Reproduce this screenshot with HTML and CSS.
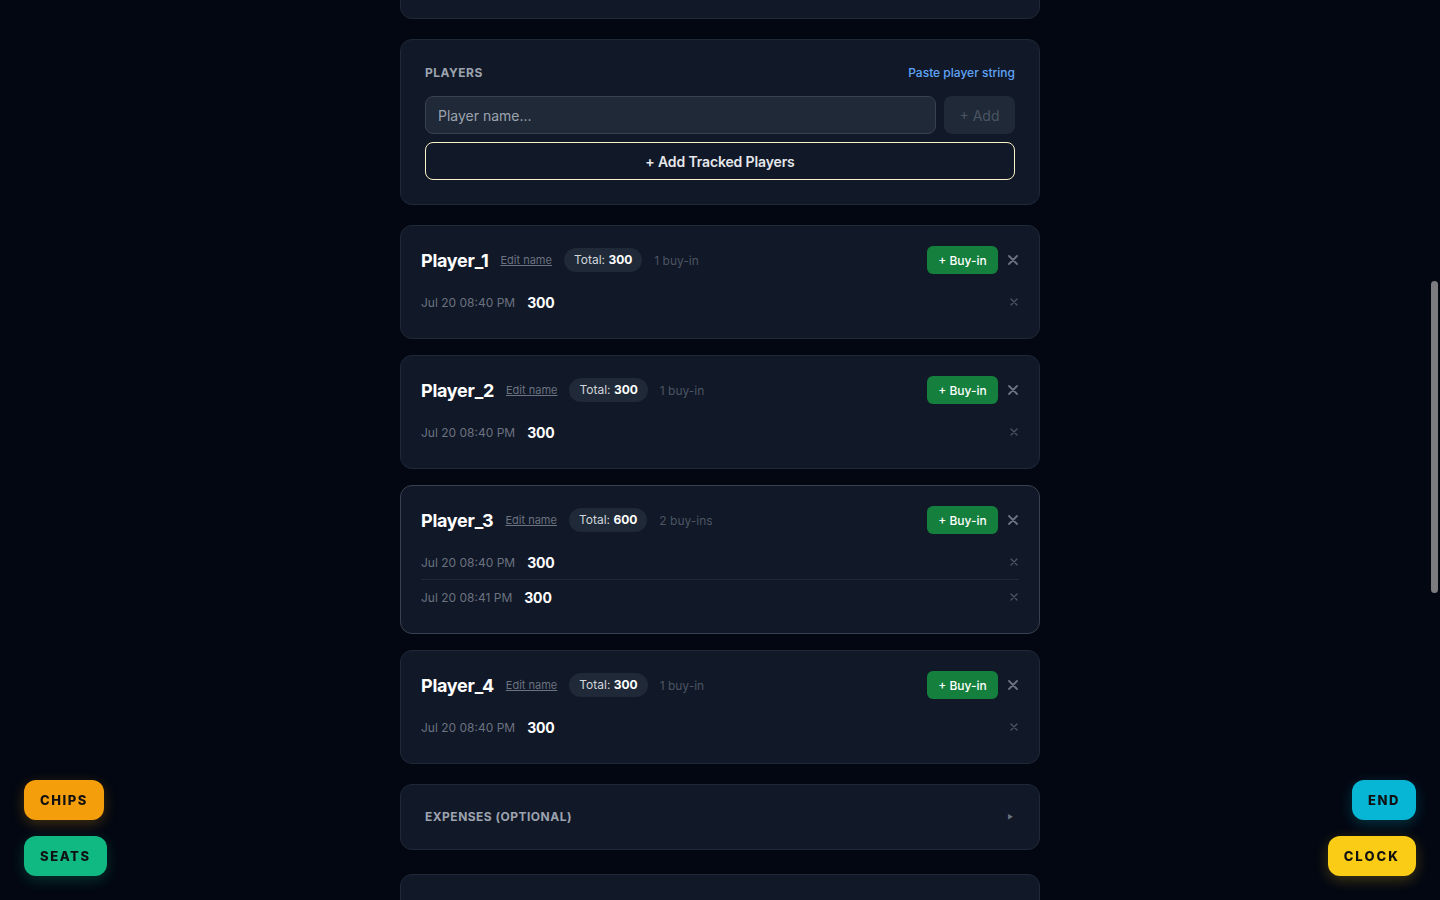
FILE: index.html
```html
<!DOCTYPE html>
<html lang="en">
<head>
    <meta charset="UTF-8">
    <meta name="viewport" content="width=device-width, initial-scale=1.0">
    <title>Game Tracker</title>
    <link rel="stylesheet" href="styles.css">
</head>
<body>
    <main class="page">
        <section class="card card-stub"></section>

        <section class="card section players">
            <div class="section-head">
                <span class="label">Players</span>
                <a class="link" href="#">Paste player string</a>
            </div>
            <div class="add-row">
                <input class="name-input" type="text" placeholder="Player name...">
                <button class="add-btn">+ Add</button>
            </div>
            <button class="tracked-btn">+ Add Tracked Players</button>
        </section>

        <div class="player-list">
            <div class="card player">
                <div class="player-head">
                    <span class="player-name">Player_1</span>
                    <a class="edit" href="#">Edit name</a>
                    <span class="pill">Total: <b>300</b></span>
                    <span class="count">1 buy-in</span>
                    <button class="buyin-btn">+ Buy-in</button>
                    <button class="remove"><svg width="10" height="10" viewBox="0 0 10 10"><path d="M1 1L9 9M9 1L1 9"/></svg></button>
                </div>
                <div class="entry">
                    <span class="time">Jul 20 08:40 PM</span><span class="amount">300</span>
                    <button class="remove small"><svg width="8" height="8" viewBox="0 0 8 8"><path d="M1 1L7 7M7 1L1 7"/></svg></button>
                </div>
            </div>

            <div class="card player">
                <div class="player-head">
                    <span class="player-name">Player_2</span>
                    <a class="edit" href="#">Edit name</a>
                    <span class="pill">Total: <b>300</b></span>
                    <span class="count">1 buy-in</span>
                    <button class="buyin-btn">+ Buy-in</button>
                    <button class="remove"><svg width="10" height="10" viewBox="0 0 10 10"><path d="M1 1L9 9M9 1L1 9"/></svg></button>
                </div>
                <div class="entry">
                    <span class="time">Jul 20 08:40 PM</span><span class="amount">300</span>
                    <button class="remove small"><svg width="8" height="8" viewBox="0 0 8 8"><path d="M1 1L7 7M7 1L1 7"/></svg></button>
                </div>
            </div>

            <div class="card player active">
                <div class="player-head">
                    <span class="player-name">Player_3</span>
                    <a class="edit" href="#">Edit name</a>
                    <span class="pill">Total: <b>600</b></span>
                    <span class="count">2 buy-ins</span>
                    <button class="buyin-btn">+ Buy-in</button>
                    <button class="remove"><svg width="10" height="10" viewBox="0 0 10 10"><path d="M1 1L9 9M9 1L1 9"/></svg></button>
                </div>
                <div class="entry">
                    <span class="time">Jul 20 08:40 PM</span><span class="amount">300</span>
                    <button class="remove small"><svg width="8" height="8" viewBox="0 0 8 8"><path d="M1 1L7 7M7 1L1 7"/></svg></button>
                </div>
                <div class="entry">
                    <span class="time">Jul 20 08:41 PM</span><span class="amount">300</span>
                    <button class="remove small"><svg width="8" height="8" viewBox="0 0 8 8"><path d="M1 1L7 7M7 1L1 7"/></svg></button>
                </div>
            </div>

            <div class="card player">
                <div class="player-head">
                    <span class="player-name">Player_4</span>
                    <a class="edit" href="#">Edit name</a>
                    <span class="pill">Total: <b>300</b></span>
                    <span class="count">1 buy-in</span>
                    <button class="buyin-btn">+ Buy-in</button>
                    <button class="remove"><svg width="10" height="10" viewBox="0 0 10 10"><path d="M1 1L9 9M9 1L1 9"/></svg></button>
                </div>
                <div class="entry">
                    <span class="time">Jul 20 08:40 PM</span><span class="amount">300</span>
                    <button class="remove small"><svg width="8" height="8" viewBox="0 0 8 8"><path d="M1 1L7 7M7 1L1 7"/></svg></button>
                </div>
            </div>
        </div>

        <section class="card section expenses">
            <span class="label">Expenses (optional)</span>
            <span class="caret">&#9654;</span>
        </section>

        <section class="card card-next"></section>
    </main>

    <div class="fab-col left">
        <button class="fab chips">CHIPS</button>
        <button class="fab seats">SEATS</button>
    </div>
    <div class="fab-col right">
        <button class="fab end">END</button>
        <button class="fab clock">CLOCK</button>
    </div>

    <div class="scroll-thumb"></div>
</body>
</html>
```

FILE: styles.css
```css
body {
    margin: 0;
    height: 900px;
    overflow: hidden;
    background: #030712;
    color: #f9fafb;
    font-family: Inter, "Noto Sans", sans-serif;
}
button {
    font-family: inherit;
    cursor: pointer;
}
.page {
    width: 640px;
    margin: 0 auto;
}
.card {
    background: #111827;
    border: 1px solid #1f2937;
    border-radius: 12px;
    box-sizing: border-box;
}
.card-stub {
    height: 60px;
    margin-top: -41px;
}
.section {
    padding: 24px;
}
.players {
    margin-top: 20px;
}
.section-head {
    display: flex;
    justify-content: space-between;
    align-items: center;
    height: 16px;
    margin-bottom: 16px;
}
.label {
    font-size: 12px;
    font-weight: 700;
    letter-spacing: 0.04em;
    text-transform: uppercase;
    color: #9ca3af;
}
.link {
    font-size: 12px;
    font-weight: 500;
    color: #60a5fa;
    text-decoration: none;
}
.add-row {
    display: flex;
    gap: 8px;
    margin-bottom: 8px;
}
.name-input {
    flex: 1;
    height: 38px;
    box-sizing: border-box;
    padding: 0 12px;
    background: #1f2937;
    border: 1px solid #374151;
    border-radius: 8px;
    color: #f9fafb;
    font-family: inherit;
    font-size: 14px;
    outline: none;
}
.name-input::placeholder {
    color: #9ca3af;
}
.add-btn {
    width: 71px;
    height: 38px;
    background: #1f2937;
    border: none;
    border-radius: 8px;
    color: #4b5563;
    font-size: 14px;
}
.tracked-btn {
    width: 100%;
    height: 38px;
    background: transparent;
    border: 1px solid #fef3c7;
    border-radius: 8px;
    color: #e5e7eb;
    font-size: 14px;
    font-weight: 600;
    letter-spacing: -0.01em;
}
.player-list {
    margin-top: 20px;
    display: flex;
    flex-direction: column;
    gap: 16px;
}
.player {
    padding: 20px 20px 19px;
}
.player.active {
    border-color: #374151;
}
.player-head {
    display: flex;
    align-items: center;
    height: 28px;
    margin-bottom: 11px;
}
.player-name {
    font-size: 18px;
    font-weight: 700;
    color: #fff;
    letter-spacing: -0.015em;
    margin-right: 12px;
}
.edit {
    font-size: 11px;
    color: #6b7280;
    text-decoration: underline;
    margin-right: 12px;
}
.pill {
    height: 24px;
    line-height: 24px;
    padding: 0 10px;
    background: #1f2937;
    border-radius: 12px;
    font-size: 12px;
    color: #d1d5db;
    margin-right: 12px;
}
.pill b {
    color: #fff;
    font-weight: 700;
}
.count {
    font-size: 12px;
    color: #4b5563;
}
.buyin-btn {
    margin-left: auto;
    height: 28px;
    width: 71px;
    padding: 0;
    background: #15803d;
    border: none;
    border-radius: 6px;
    color: #fff;
    font-size: 12px;
    font-weight: 500;
}
.remove {
    background: none;
    border: none;
    padding: 0;
    margin-left: 9px;
    width: 12px;
    display: flex;
    align-items: center;
    justify-content: center;
}
.remove svg path {
    stroke: #6b7280;
    stroke-width: 1.8;
    stroke-linecap: round;
}
.remove.small {
    margin-left: auto;
    margin-right: -1px;
}
.remove.small svg path {
    stroke: #4b5563;
    stroke-width: 1.3;
}
.entry {
    display: flex;
    align-items: center;
    height: 34px;
}
.entry + .entry {
    border-top: 1px solid #1f2937;
}
.time {
    font-size: 12px;
    color: #6b7280;
    margin-right: 12px;
}
.amount {
    font-size: 14px;
    font-weight: 700;
    color: #fff;
    letter-spacing: -0.01em;
}
.expenses {
    margin-top: 20px;
    display: flex;
    justify-content: space-between;
    align-items: center;
    line-height: 16px;
}
.caret {
    font-size: 6px;
    color: #6b7280;
    margin-right: 2px;
}
.card-next {
    margin-top: 24px;
    height: 80px;
}
.fab-col {
    position: fixed;
    bottom: 24px;
    display: flex;
    flex-direction: column;
    gap: 16px;
}
.fab-col.left {
    left: 24px;
    align-items: flex-start;
}
.fab-col.right {
    right: 24px;
    align-items: flex-end;
}
.fab {
    height: 40px;
    padding: 0 16px;
    border: none;
    border-radius: 12px;
    color: #111;
    font-size: 13px;
    font-weight: 800;
    letter-spacing: 0.12em;
}
.chips {
    background: #f59e0b;
    box-shadow: 0 4px 14px rgba(245, 158, 11, 0.25);
}
.seats {
    background: #10b981;
    box-shadow: 0 4px 14px rgba(16, 185, 129, 0.25);
}
.end {
    background: #06b6d4;
    box-shadow: 0 4px 14px rgba(6, 182, 212, 0.25);
}
.clock {
    background: #facc15;
    letter-spacing: 0.16em;
    box-shadow: 0 4px 14px rgba(250, 204, 21, 0.25);
}
.scroll-thumb {
    position: fixed;
    right: 2px;
    top: 281px;
    width: 7px;
    height: 312px;
    border-radius: 4px;
    background: #7b7b80;
}
```
